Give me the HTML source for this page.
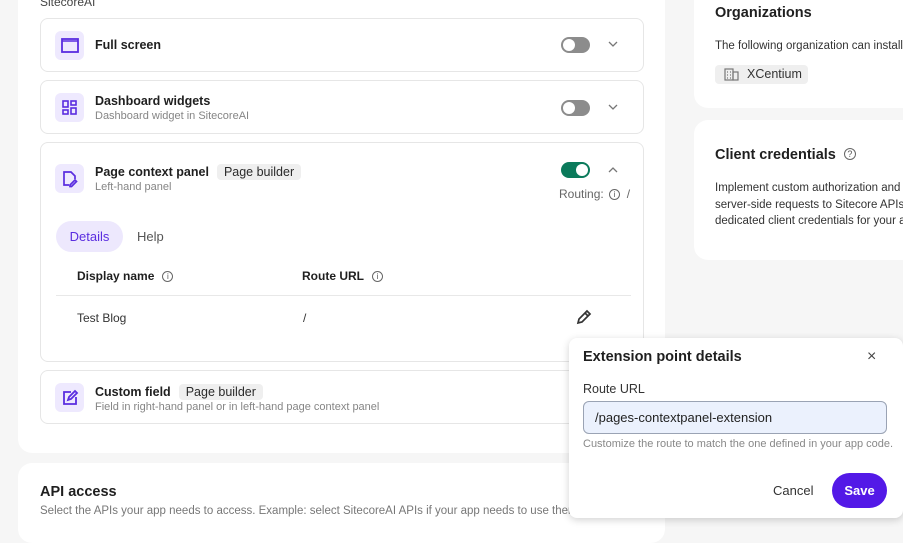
<!DOCTYPE html>
<html><head><style>
*{box-sizing:border-box;margin:0;padding:0}
body{width:903px;height:522px;overflow:hidden;background:#f6f6f6;font-family:"Liberation Sans",sans-serif;color:#1f1f1f;position:relative}
.a{position:absolute}
.panel{position:absolute;background:#fff;border-radius:14px}
.card{position:absolute;left:40px;width:604px;background:#fff;border:1px solid #e6e6e6;border-radius:8px}
.ic{position:absolute;left:14px;width:29px;height:29px;border-radius:6px;background:#eee9fe}
.t{position:absolute;left:54px;font-size:12.5px;font-weight:bold;color:#1f1f1f}
.s{position:absolute;left:54px;font-size:11px;color:#858585}
.tog{position:absolute;width:29px;height:16px;border-radius:8px;background:#8c8c8c}
.tog::after{content:"";position:absolute;left:2px;top:2px;width:12px;height:12px;border-radius:50%;background:#fff}
.tog.on{background:#0b7a5b}.tog.on::after{left:15px}
.chev{position:absolute}
.badge{display:inline-block;background:#efefef;border-radius:4px;padding:1px 7px;font-weight:normal;font-size:12.5px;margin-left:8px;color:#2a2a2a}
.info{display:inline-block;width:11px;height:11px;border:1px solid #666;border-radius:50%;font-size:8px;line-height:9px;text-align:center;color:#555;vertical-align:1px;margin-left:8px;font-weight:normal}
</style></head><body>
<div class="panel" style="left:18px;top:-20px;width:647px;height:473px"></div>
<div class="a" style="left:40px;top:-5px;font-size:12px;color:#444">SitecoreAI</div>

<div class="card" style="top:18px;height:54px">
 <div class="ic" style="top:12px"><svg width="29" height="29"><rect x="7" y="8" width="16" height="13" fill="none" stroke="#5a2de0" stroke-width="1.8"/><line x1="7" y1="10" x2="23" y2="10" stroke="#5a2de0" stroke-width="1.5"/></svg></div>
 <div class="t" style="top:19px">Full screen</div>
 <div class="tog" style="left:520px;top:18px"></div>
 <svg class="chev" style="left:567px;top:22px" width="10" height="7" fill="none" stroke="#777" stroke-width="1.3"><path d="M1 1l4 4 4-4"/></svg>
</div>
<div class="card" style="top:80px;height:54px">
 <div class="ic" style="top:12px"><svg width="29" height="29" fill="none" stroke="#5a2de0" stroke-width="1.6"><rect x="8" y="8" width="5" height="6"/><rect x="8" y="17" width="5" height="4"/><rect x="16" y="8" width="5" height="4"/><rect x="16" y="15" width="5" height="6"/></svg></div>
 <div class="t" style="top:13px">Dashboard widgets</div>
 <div class="s" style="top:29px">Dashboard widget in SitecoreAI</div>
 <div class="tog" style="left:520px;top:19px"></div>
 <svg class="chev" style="left:567px;top:23px" width="10" height="7" fill="none" stroke="#777" stroke-width="1.3"><path d="M1 1l4 4 4-4"/></svg>
</div>
<div class="card" style="top:142px;height:220px">
 <div class="ic" style="top:21px"><svg width="29" height="29" fill="none" stroke="#5a2de0" stroke-width="1.7"><path d="M14 21H9V8h7l4 4v3"/><path d="M15 21l5-5 1.5 1.5-5 5H15z"/></svg></div>
 <div class="t" style="top:21px">Page context panel<span class="badge">Page builder</span></div>
 <div class="s" style="top:38px">Left-hand panel</div>
 <div class="tog on" style="left:520px;top:19px"></div>
 <svg class="chev" style="left:567px;top:23px" width="10" height="7" fill="none" stroke="#777" stroke-width="1.3"><path d="M1 6l4-4 4 4"/></svg>
 <div class="a" style="left:518px;top:44px;font-size:12px;color:#666">Routing: <span class="info" style="margin-left:2px">i</span> &nbsp;/</div>
 <div class="a" style="left:15px;top:78px;width:67px;height:31px;border-radius:16px;background:#ede8fd;color:#5a2de0;font-size:13px;text-align:center;line-height:31px">Details</div>
 <div class="a" style="left:96px;top:86px;font-size:13px;color:#555">Help</div>
 <div class="a" style="left:36px;top:126px;font-size:12px;font-weight:bold">Display name<span class="info">i</span></div>
 <div class="a" style="left:261px;top:126px;font-size:12px;font-weight:bold">Route URL<span class="info">i</span></div>
 <div class="a" style="left:15px;top:152px;width:575px;height:1px;background:#e8e8e8"></div>
 <div class="a" style="left:36px;top:168px;font-size:12px;color:#333">Test Blog</div>
 <div class="a" style="left:262px;top:168px;font-size:12px;color:#333">/</div>
 <svg class="a" style="left:535px;top:166px" width="16" height="16" fill="none" stroke="#333" stroke-width="1.7"><path d="M2 14l1-4 8-8 3 3-8 8z M9 4l3 3"/></svg>
</div>
<div class="card" style="top:370px;height:54px">
 <div class="ic" style="top:12px"><svg width="29" height="29" fill="none" stroke="#5a2de0" stroke-width="1.8"><path d="M16 9H9v12h12v-7"/><path d="M13 17l1-3 6-6 2 2-6 6z"/></svg></div>
 <div class="t" style="top:13px">Custom field<span class="badge">Page builder</span></div>
 <div class="s" style="top:30px">Field in right-hand panel or in left-hand page context panel</div>
</div>

<div class="panel" style="left:18px;top:463px;width:647px;height:80px"></div>
<div class="a" style="left:40px;top:484px;font-size:14.5px;font-weight:bold">API access</div>
<div class="a" style="left:40px;top:505px;font-size:11.5px;color:#777;white-space:nowrap">Select the APIs your app needs to access. Example: select SitecoreAI APIs if your app needs to use them.</div>

<div class="panel" style="left:694px;top:-20px;width:230px;height:128px"></div>
<div class="a" style="left:715px;top:5px;font-size:14.5px;font-weight:bold">Organizations</div>
<div class="a" style="left:715px;top:40px;font-size:11.5px;color:#333;white-space:nowrap">The following organization can install</div>
<div class="a" style="left:715px;top:65px;width:93px;height:19px;background:#efefef;border-radius:4px;font-size:12.5px;color:#333;line-height:19px;padding-left:32px">XCentium
 <svg class="a" style="left:9px;top:3px" width="15" height="13" fill="none" stroke="#777" stroke-width="1.2"><rect x="1" y="1" width="8" height="11"/><rect x="9" y="4" width="5" height="8"/><path d="M3 4h1M6 4h1M3 7h1M6 7h1M3 10h1M6 10h1"/></svg></div>

<div class="panel" style="left:694px;top:120px;width:230px;height:140px"></div>
<div class="a" style="left:715px;top:147px;font-size:14.5px;font-weight:bold">Client credentials <span style="display:inline-block;width:12px;height:12px;border:1px solid #666;border-radius:50%;font-size:9px;line-height:10px;text-align:center;font-weight:normal;color:#555;margin-left:4px;vertical-align:2px">?</span></div>
<div class="a" style="left:715px;top:180px;font-size:11.5px;color:#333;line-height:16.5px;white-space:nowrap">Implement custom authorization and<br>server-side requests to Sitecore APIs<br>dedicated client credentials for your a</div>

<div class="a" style="left:569px;top:338px;width:334px;height:180px;background:#fff;border-radius:8px;box-shadow:0 2px 8px rgba(0,0,0,.18)">
 <div class="a" style="left:14px;top:11px;font-size:14.5px;font-weight:bold">Extension point details</div>
 <div class="a" style="left:298px;top:10px;font-size:16px;color:#444">&#215;</div>
 <div class="a" style="left:14px;top:44px;font-size:12.5px;color:#333">Route URL</div>
 <div class="a" style="left:14px;top:63px;width:304px;height:33px;background:#ebf1fd;border:1px solid #9aa3b4;border-radius:6px;font-size:13px;line-height:31px;padding-left:11px;color:#222">/pages-contextpanel-extension</div>
 <div class="a" style="left:14px;top:100px;font-size:11px;color:#888;white-space:nowrap">Customize the route to match the one defined in your app code.</div>
 <div class="a" style="left:204px;top:145px;font-size:13px;color:#333">Cancel</div>
 <div class="a" style="left:263px;top:135px;width:55px;height:35px;border-radius:18px;background:#5319e7;color:#fff;font-size:13px;font-weight:bold;text-align:center;line-height:35px">Save</div>
</div>
</body></html>
